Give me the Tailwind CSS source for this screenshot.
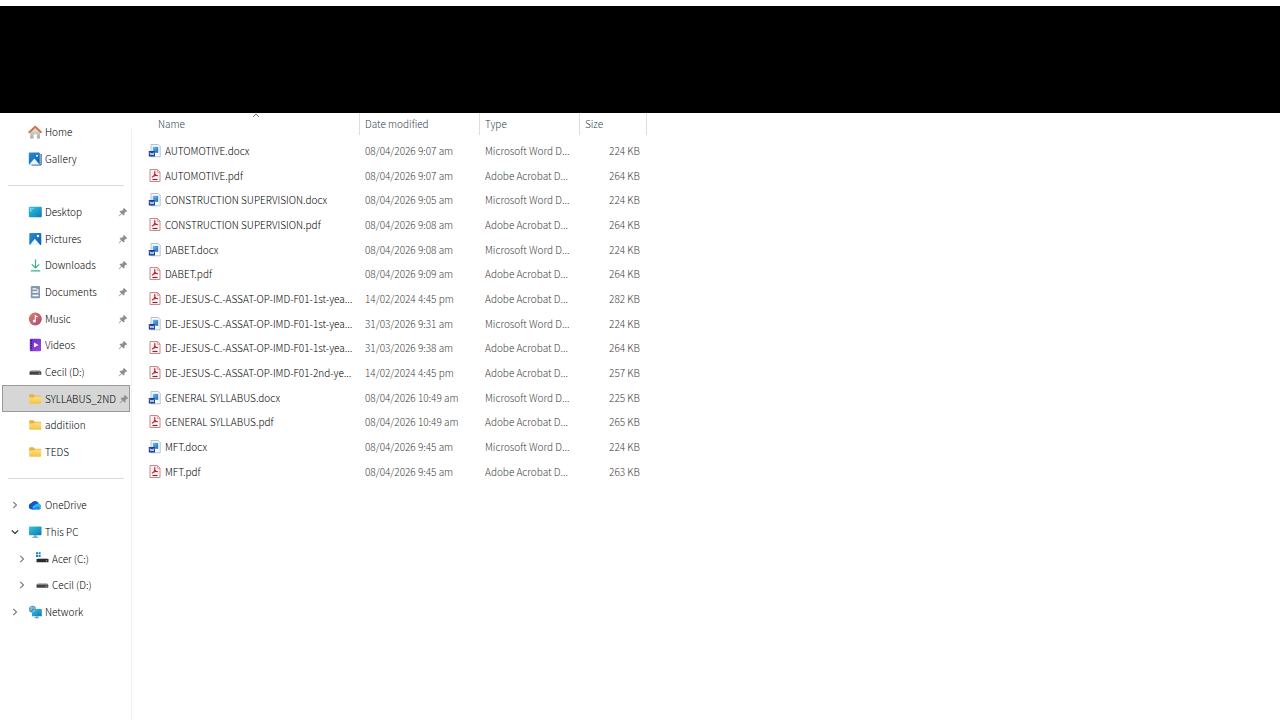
<!DOCTYPE html>
<html lang="en">

<head>
    <meta charset="UTF-8">
    <meta name="viewport" content="width=device-width, initial-scale=1.0">
    <title>SYLLABUS_2ND</title>
    <script src="https://cdn.jsdelivr.net/npm/@tailwindcss/browser@4"></script>
</head>

<body class="bg-white font-['Noto_Sans_CJK_SC',sans-serif] text-[10px] leading-4 font-light text-black">

    <!-- Icon sprite -->
    <svg class="absolute size-0" aria-hidden="true">
        <defs>
            <linearGradient id="g-blue" x1="0" y1="0" x2="1" y2="1"><stop offset="0" stop-color="#2b8fd6"/><stop offset="1" stop-color="#0d5ca8"/></linearGradient>
            <linearGradient id="g-teal" x1="0" y1="0" x2="1" y2="1"><stop offset="0" stop-color="#35c8dd"/><stop offset="1" stop-color="#0a78b4"/></linearGradient>
            <linearGradient id="g-music" x1="0" y1="0" x2="1" y2="1"><stop offset="0" stop-color="#e0805c"/><stop offset="1" stop-color="#a84880"/></linearGradient>
            <linearGradient id="g-video" x1="0" y1="0" x2="1" y2="1"><stop offset="0" stop-color="#6a30c8"/><stop offset="1" stop-color="#9a44e0"/></linearGradient>
            <linearGradient id="g-folder" x1="0" y1="0" x2="0" y2="1"><stop offset="0" stop-color="#ffe082"/><stop offset="1" stop-color="#f5c242"/></linearGradient>
            <linearGradient id="g-house" x1="0" y1="0" x2="0" y2="1"><stop offset="0" stop-color="#eeeeee"/><stop offset="1" stop-color="#a8a8a8"/></linearGradient>
            <linearGradient id="g-word" x1="0" y1="0" x2="1" y2="1"><stop offset="0" stop-color="#6cc0f5"/><stop offset="1" stop-color="#1f62c4"/></linearGradient>
        </defs>
        <symbol id="home" viewBox="0 0 14 14">
            <path d="M2.200 6.500 7.200 2l4.800 4.500V13.500H8.900V9.300H5.500v4.200H2.200z" fill="url(#g-house)"/>
            <path d="M1.300 7.200 7.200 1.700l5.800 5.500" fill="none" stroke="#cf7440" stroke-width="1.900" stroke-linecap="round" stroke-linejoin="round"/>
        </symbol>
        <symbol id="gallery" viewBox="0 0 14 14">
            <path d="M12.500 2h1.100V12.500a1 1 0 0 1-1 1H3.500v-1h9z" fill="#164f86"/>
            <rect x=".8" y=".5" width="11" height="12" rx="1" fill="url(#g-blue)"/>
            <path d="m1.200 12.500 5.200-6 5.100 6z" fill="#e8f5ff"/>
            <circle cx="9" cy="3.800" r="1" fill="#fff"/>
        </symbol>
        <symbol id="desktop" viewBox="0 0 14 14">
            <rect x=".8" y="1.800" width="13" height="10.400" rx="1" fill="url(#g-teal)"/>
            <path d="M2.200 3.800h1.300M2.200 5.800h1.300M4.500 3.800h1" stroke="#d8fbff" stroke-width="1"/>
        </symbol>
        <symbol id="pictures" viewBox="0 0 14 14">
            <rect x="1.300" y="1" width="12" height="12" rx="1" fill="url(#g-blue)"/>
            <path d="m1.800 13 5-6.300 5.500 6.300z" fill="#e8f5ff"/>
            <circle cx="10" cy="4" r="1.200" fill="#fff"/>
        </symbol>
        <symbol id="downloads" viewBox="0 0 14 14">
            <path d="M7.500 1.500v8M3.800 6.300 7.500 10l3.700-3.700M2.800 12.800h9.400" fill="none" stroke="#38b48c" stroke-width="1.200"/>
        </symbol>
        <symbol id="documents" viewBox="0 0 14 14">
            <rect x="2.800" y="1" width="9.200" height="12.200" rx="1" fill="#8398b0"/>
            <path d="M4.500 3.800h4M4.500 7h6M4.500 10.500h6" stroke="#fff" stroke-width="1.300"/>
            <path d="M8.700 5h2" stroke="#dce6f0" stroke-width="1.500"/>
        </symbol>
        <symbol id="music" viewBox="0 0 14 14">
            <circle cx="7.300" cy="7" r="6.500" fill="url(#g-music)"/>
            <circle cx="6.300" cy="9" r="1.500" fill="#fff"/>
            <path d="M7.300 9V3.500l2.300 1.600" fill="none" stroke="#fff" stroke-width="1.100"/>
        </symbol>
        <symbol id="videos" viewBox="0 0 14 14">
            <rect x="1.800" y=".8" width="11.200" height="12.400" rx="1" fill="url(#g-video)"/>
            <path d="M3.200 2v10.500" stroke="#321074" stroke-width="1.300" stroke-dasharray="1.300 1.200"/>
            <path d="m6 4.500 4.500 2.500L6 9.500z" fill="#fff"/>
        </symbol>
        <symbol id="drive" viewBox="0 0 14 14">
            <path d="M3 5h9l1.300 2H1.500z" fill="#bdbdbd"/>
            <rect x="1.500" y="6.500" width="11.800" height="3.300" rx=".5" fill="#444"/>
            <path d="M10.800 8.300h1.300" stroke="#a5e4ac" stroke-width=".8"/>
        </symbol>
        <symbol id="system" viewBox="0 0 14 14">
            <path d="M1 .3h2v2H1zM3.600 .3h2v2h-2zM1 2.900h2v2H1zM3.600 2.900h2v2h-2z" fill="#1683c8"/>
            <path d="M3 6h9.300l1.200 1.700H1.500z" fill="#bdbdbd"/>
            <rect x="1.500" y="7" width="12" height="3.300" rx=".5" fill="#2c2c2c"/>
            <path d="M10.800 8.800h1.300" stroke="#a5e4ac" stroke-width=".8"/>
        </symbol>
        <symbol id="folder" viewBox="0 0 14 14">
            <path d="M1.200 3a.8.8 0 0 1 .8-.8h3.400L6.900 3.800h5.500a.8.8 0 0 1 .8.800V6h-12z" fill="#e8b23c"/>
            <path d="M1.200 5.500h4.500l1.500-1h6v6.500a.8.8 0 0 1-.8.8H2a.8.8 0 0 1-.8-.8z" fill="url(#g-folder)"/>
        </symbol>
        <symbol id="onedrive" viewBox="0 0 14 14">
            <path d="M3.800 11.500a3.300 3.300 0 0 1-.4-6.500A4.300 4.300 0 0 1 11 5.500L6 11.500z" fill="#1456c4"/>
            <path d="M5 11.500 4.500 8.500l4.500-3a3 3 0 0 1 1.800.1 3 3 0 0 1-.2 5.900z" fill="#36b2f2"/>
            <path d="M3.800 11.500 9.500 8.300l3.300 2.200a3 3 0 0 1-2.200 1z" fill="#1f86e6"/>
        </symbol>
        <symbol id="pc" viewBox="0 0 14 14">
            <rect x="1" y="1.500" width="12.500" height="8.700" rx=".7" fill="url(#g-teal)"/>
            <path d="M6.300 10.200h2v1.500h2v1h-6v-1h2z" fill="#4d9fc0"/>
        </symbol>
        <symbol id="network" viewBox="0 0 14 14">
            <rect x="4" y="4" width="9.800" height="7.300" rx=".6" fill="url(#g-teal)"/>
            <path d="M8 11.300h1.500v1H11v1H6.500v-1H8z" fill="#4d9fc0"/>
            <circle cx="4.500" cy="4.300" r="3.500" fill="#4a9bc4"/>
            <path d="M2.500 2.500c1.500-1 2 .5 1.500 1.200S2.500 4 2.200 5M5.500 2c0 1 .5 1.300 1.800 1.700M5 7.200c0-1 .8-1.700 2-1.700" fill="none" stroke="#bfe6f2" stroke-width=".8"/>
        </symbol>
        <symbol id="pin" viewBox="0 0 10 10">
            <path d="m5.800.8 3.500 3.500-.8.500-.6-.1-1.500 1.500.1 1.700-.8.700L3.700 6.800 1.200 9.200l-.5.100.1-.5 2.400-2.500L1.500 4.500l.7-.8 1.700.1 1.500-1.500-.1-.7z" fill="#8c8f94"/>
        </symbol>
        <symbol id="chevron" viewBox="0 0 10 10">
            <path d="m3.300 1.800 3.200 3.200-3.200 3.200" fill="none" stroke="currentColor" stroke-width="1.100"/>
        </symbol>
        <symbol id="docx" viewBox="0 0 14 14">
            <path d="M3 .5h7.300l1.900 1.900v10.400H3z" fill="#f6faff" stroke="#9fb2c8" stroke-width=".8"/>
            <path d="M4.800 2.800h5.400v6H4.800z" fill="url(#g-word)"/>
            <rect x=".8" y="7" width="6.200" height="5.600" rx=".4" fill="#173f94"/>
            <path d="m2 8.500.9 2.600L4 9l1.100 2.100.9-2.600" fill="none" stroke="#fff" stroke-width=".8"/>
        </symbol>
        <symbol id="pdf" viewBox="0 0 14 14">
            <path d="M2 .5h7.500L12 3v9.500H2z" fill="#fff6f6" stroke="#c47c82" stroke-width=".9"/>
            <path d="M9.300.6v2.700H12" fill="none" stroke="#c47c82" stroke-width=".7"/>
            <path d="M6.800 2.800C6 4.400 7.600 6.600 10 6.800 7.800 6.200 5 7.200 4 8.200c2-.7 3.300-3.500 2.800-5.400z" fill="none" stroke="#c8202c" stroke-width="1.100"/>
            <path d="M4.500 10.500h5" stroke="#5c3a3c" stroke-width="1.200"/>
        </symbol>
    </svg>

    <div class="flex min-h-screen flex-col">
        <!-- Title area -->
        <header class="mt-[6px] h-[107px] bg-black"></header>

        <div class="flex flex-1">
            <!-- Navigation pane -->
            <nav class="relative w-[132px] shrink-0 pt-[5px]" aria-label="Navigation">
                <div class="absolute top-4 right-0 bottom-0 w-px bg-[#f0f0f0]"></div>
                <ul id="places"></ul>
            </nav>

            <!-- File list -->
            <main class="flex-1">
                <table class="w-[515px] table-fixed">
                    <colgroup>
                        <col class="w-[228px]">
                        <col class="w-[120px]">
                        <col class="w-[100px]">
                        <col class="w-[67px]">
                    </colgroup>
                    <thead>
                        <tr class="h-[25px] text-left align-top text-[#34414f]">
                            <th class="relative p-0 font-light">
                                <div class="h-[22px] border-r border-[#dedede] pl-[26px] leading-[22px]">Name</div>
                                <svg class="absolute top-0 left-[120px] h-[5px] w-2" viewBox="0 0 8 5"><path d="m1 4 3-3 3 3" fill="none" stroke="#777" stroke-width="1"/></svg>
                            </th>
                            <th class="p-0 font-light"><div class="h-[22px] border-r border-[#dedede] pl-[5px] leading-[22px]">Date modified</div></th>
                            <th class="p-0 font-light"><div class="h-[22px] border-r border-[#dedede] pl-[5px] leading-[22px]">Type</div></th>
                            <th class="p-0 font-light"><div class="h-[22px] border-r border-[#dedede] pl-[5px] leading-[22px]">Size</div></th>
                        </tr>
                    </thead>
                    <tbody id="files"></tbody>
                </table>
            </main>
        </div>
    </div>

    <script>
        // Navigation pane entries, null draws a separator
        const places = [
            { name: 'Home', icon: 'home' },
            { name: 'Gallery', icon: 'gallery' },
            null,
            { name: 'Desktop', icon: 'desktop', pinned: true },
            { name: 'Pictures', icon: 'pictures', pinned: true },
            { name: 'Downloads', icon: 'downloads', pinned: true },
            { name: 'Documents', icon: 'documents', pinned: true },
            { name: 'Music', icon: 'music', pinned: true },
            { name: 'Videos', icon: 'videos', pinned: true },
            { name: 'Cecil (D:)', icon: 'drive', pinned: true },
            { name: 'SYLLABUS_2ND', icon: 'folder', pinned: true, selected: true },
            { name: 'additiion', icon: 'folder' },
            { name: 'TEDS', icon: 'folder' },
            null,
            { name: 'OneDrive', icon: 'onedrive', tree: 'closed' },
            { name: 'This PC', icon: 'pc', tree: 'open' },
            { name: 'Acer (C:)', icon: 'system', tree: 'closed', nested: true },
            { name: 'Cecil (D:)', icon: 'drive', tree: 'closed', nested: true },
            { name: 'Network', icon: 'network', tree: 'closed' },
        ];

        const files = [
            ['AUTOMOTIVE.docx', '08/04/2026 9:07 am', 'docx', '224 KB'],
            ['AUTOMOTIVE.pdf', '08/04/2026 9:07 am', 'pdf', '264 KB'],
            ['CONSTRUCTION SUPERVISION.docx', '08/04/2026 9:05 am', 'docx', '224 KB'],
            ['CONSTRUCTION SUPERVISION.pdf', '08/04/2026 9:08 am', 'pdf', '264 KB'],
            ['DABET.docx', '08/04/2026 9:08 am', 'docx', '224 KB'],
            ['DABET.pdf', '08/04/2026 9:09 am', 'pdf', '264 KB'],
            ['DE-JESUS-C.-ASSAT-OP-IMD-F01-1st-yea...', '14/02/2024 4:45 pm', 'pdf', '282 KB'],
            ['DE-JESUS-C.-ASSAT-OP-IMD-F01-1st-yea...', '31/03/2026 9:31 am', 'docx', '224 KB'],
            ['DE-JESUS-C.-ASSAT-OP-IMD-F01-1st-yea...', '31/03/2026 9:38 am', 'pdf', '264 KB'],
            ['DE-JESUS-C.-ASSAT-OP-IMD-F01-2nd-ye...', '14/02/2024 4:45 pm', 'pdf', '257 KB'],
            ['GENERAL SYLLABUS.docx', '08/04/2026 10:49 am', 'docx', '225 KB'],
            ['GENERAL SYLLABUS.pdf', '08/04/2026 10:49 am', 'pdf', '265 KB'],
            ['MFT.docx', '08/04/2026 9:45 am', 'docx', '224 KB'],
            ['MFT.pdf', '08/04/2026 9:45 am', 'pdf', '263 KB'],
        ];

        const types = { docx: 'Microsoft Word D...', pdf: 'Adobe Acrobat D...' };

        document.getElementById('places').innerHTML = places.map(p => {
            if (!p) {
                return `<li class="flex h-[27px] items-center pr-2 pl-2 nth-[3n]:h-[26px]"><hr class="w-full border-[#d9d9d9]"></li>`;
            }
            const toggle = p.tree
                ? `<button class="${p.tree === 'open' ? 'rotate-90 text-[#222]' : 'text-[#777]'}" aria-label="Toggle ${p.name}"><svg class="size-[10px]"><use href="#chevron"/></svg></button>`
                : '';
            const pin = p.pinned ? `<svg class="ml-auto size-[10px] shrink-0"><use href="#pin"/></svg>` : '';
            return `<li class="mr-[2px] ml-[2px] flex h-[27px] items-center border nth-[3n]:h-[26px] ${p.selected ? 'border-[#999] bg-[#d6d6d6]' : 'border-transparent'} ${p.nested ? 'pl-[14px]' : 'pl-[7px]'}">
                        <span class="flex w-[18px] shrink-0 items-center">${toggle}</span>
                        <a href="#" class="flex flex-1 items-center gap-[3px] pr-px whitespace-nowrap">
                            <svg class="size-[14px] shrink-0"><use href="#${p.icon}"/></svg>${p.name}${pin}
                        </a>
                    </li>`;
        }).join('');

        document.getElementById('files').innerHTML = files.map(([name, date, type, size]) => `
            <tr class="h-[25px] whitespace-nowrap text-[#3c3c3c] nth-[3n]:h-[24px]">
                <td class="p-0 pl-4">
                    <a href="#" class="flex items-center gap-[3px] text-black"><svg class="size-[14px] shrink-0"><use href="#${type}"/></svg>${name}</a>
                </td>
                <td class="p-0 pl-[5px]">${date}</td>
                <td class="p-0 pl-[5px]">${types[type]}</td>
                <td class="p-0 pr-[7px] text-right">${size}</td>
            </tr>`).join('');
    </script>

</body>

</html>
